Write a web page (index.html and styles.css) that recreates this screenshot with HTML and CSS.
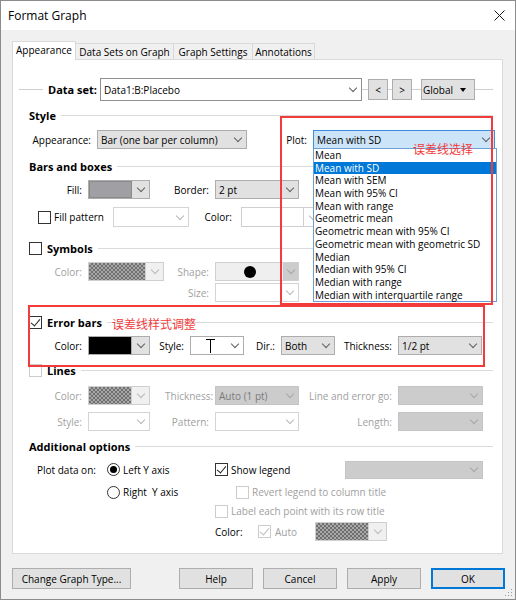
FILE: index.html
```html
<!DOCTYPE html>
<html lang="en">

<head>
    <meta charset="UTF-8">
    <meta name="viewport" content="width=device-width, initial-scale=1.0">
    <title>Format Graph</title>
    <link rel="stylesheet" href="styles.css">
</head>

<body>
    <div class="window">
        <div class="titlebar">
            <span class="title">Format Graph</span>
            <svg class="close" width="11" height="11" viewBox="0 0 11 11">
                <path d="M0.5 0.5L10.5 10.5M10.5 0.5L0.5 10.5" stroke="#1a1a1a" stroke-width="1" />
            </svg>
        </div>

        <div class="tabs">
            <span class="tab active t1">Appearance</span>
            <span class="tab t2">Data Sets on Graph</span>
            <span class="tab t3">Graph Settings</span>
            <span class="tab t4">Annotations</span>
        </div>

        <div class="panel">
            <!-- data set picker -->
            <div class="dataset-row">
                <span class="seg s24"></span>
                <b class="ds-label">Data set:</b>
                <span class="combo white ds-combo"><span class="val">Data1:B:Placebo</span><i class="dd"></i></span>
                <span class="seg s6"></span>
                <span class="btn nav">&lt;</span>
                <span class="seg s4"></span>
                <span class="btn nav">&gt;</span>
                <span class="seg s9"></span>
                <span class="btn global">Global<i class="tri"></i></span>
                <span class="seg grow"></span>
            </div>

            <div class="section-head mt7"><b>Style</b></div>
            <div class="app-row mt8">
                <span class="lab">Appearance:</span>
                <span class="combo w150"><span class="val">Bar (one bar per column)</span><i class="dd"></i></span>
                <span class="lab">Plot:</span>
                <span class="combo focus w182"><span class="val">Mean with SD</span><i class="dd"></i></span>
            </div>

            <div class="section-head mt10"><b>Bars and boxes</b></div>
            <div class="frow mt7">
                <span class="lab">Fill:</span>
                <span class="swatch w62"><i class="sw fill"></i><i class="dd"></i></span>
                <span class="lab">Border:</span>
                <span class="combo w84"><span class="val">2 pt</span><i class="dd"></i></span>
            </div>
            <div class="pattern-row mt8">
                <span class="opt pl25"><i class="chk"></i>Fill pattern</span>
                <span class="combo off w76 h20"><span class="val"></span><i class="dd"></i></span>
                <span class="lab pr9">Color:</span>
                <span class="swatch plain w81 h20"><i class="sw"></i><i class="dd"></i></span>
            </div>

            <div class="section-head mt14"><i class="chk"></i><b>Symbols</b></div>
            <div class="frow mt7">
                <span class="lab dim">Color:</span>
                <span class="swatch off w76"><i class="sw checker"></i><i class="dd"></i></span>
                <span class="lab dim">Shape:</span>
                <span class="combo shape w84"><span class="val"><i class="dot"></i></span><i class="dd"></i></span>
            </div>
            <div class="frow mt2">
                <span></span>
                <span></span>
                <span class="lab dim">Size:</span>
                <span class="combo off w84"><span class="val"></span><i class="dd"></i></span>
            </div>

            <div class="section-head mt13"><i class="chk on"></i><b>Error bars</b></div>
            <div class="err-row mt7">
                <span class="lab">Color:</span>
                <span class="swatch w62"><i class="sw black"></i><i class="dd"></i></span>
                <span class="lab">Style:</span>
                <span class="combo white w54">
                    <span class="val">
                        <svg class="cap" width="9" height="14" viewBox="0 0 9 14">
                            <path d="M0 0.5H9M4.5 0.5V14" stroke="#000" stroke-width="1" />
                        </svg>
                    </span><i class="dd"></i>
                </span>
                <span class="lab">Dir.:</span>
                <span class="combo w54"><span class="val">Both</span><i class="dd"></i></span>
                <span class="lab">Thickness:</span>
                <span class="combo w84"><span class="val">1/2 pt</span><i class="dd"></i></span>
            </div>

            <div class="section-head mt8"><i class="chk off"></i><b>Lines</b></div>
            <div class="frow mt9">
                <span class="lab dim">Color:</span>
                <span class="swatch off w62"><i class="sw checker"></i><i class="dd"></i></span>
                <span class="lab dim">Thickness:</span>
                <span class="combo grey w84"><span class="val">Auto (1 pt)</span><i class="dd"></i></span>
                <span class="lab dim">Line and error go:</span>
                <span class="combo grey w85"><span class="val"></span><i class="dd"></i></span>
            </div>
            <div class="frow mt7">
                <span class="lab dim">Style:</span>
                <span class="combo off w62"><span class="val"></span><i class="dd"></i></span>
                <span class="lab dim">Pattern:</span>
                <span class="combo off w84"><span class="val"></span><i class="dd"></i></span>
                <span class="lab dim">Length:</span>
                <span class="combo grey w85"><span class="val"></span><i class="dd"></i></span>
            </div>

            <div class="section-head mt8"><b>Additional options</b></div>
            <div class="arow h19 mt7">
                <span class="plab">Plot data on:</span>
                <span class="opt"><i class="radio on"></i>Left Y axis</span>
                <span class="opt"><i class="chk on"></i>Show legend</span>
                <span class="combo grey w138 h18"><span class="val"></span><i class="dd"></i></span>
            </div>
            <div class="arow h18 mt4">
                <span></span>
                <span class="opt"><i class="radio"></i>Right&nbsp; Y axis</span>
                <span class="opt dim pl21"><i class="chk off"></i>Revert legend to column title</span>
            </div>
            <div class="arow h14 mt3">
                <span></span>
                <span></span>
                <span class="opt dim"><i class="chk off"></i>Label each point with its row title</span>
            </div>
            <div class="arow h19 mt4">
                <span></span>
                <span></span>
                <span class="color-line">
                    <span class="clab">Color:</span>
                    <i class="chk off on"></i>
                    <span class="auto dim">Auto</span>
                    <span class="swatch off w72"><i class="sw checker"></i><i class="dd"></i></span>
                </span>
            </div>
        </div>

        <div class="buttons">
            <span class="btn wide">Change Graph Type...</span>
            <span class="btn act help">Help</span>
            <span class="btn act">Cancel</span>
            <span class="btn act">Apply</span>
            <span class="btn act default">OK</span>
        </div>

        <!-- open dropdown of the Plot combo -->
        <ul class="droplist">
            <li>Mean</li>
            <li class="sel">Mean with SD</li>
            <li>Mean with SEM</li>
            <li>Mean with 95% CI</li>
            <li>Mean with range</li>
            <li>Geometric mean</li>
            <li>Geometric mean with 95% CI</li>
            <li>Geometric mean with geometric SD</li>
            <li>Median</li>
            <li>Median with 95% CI</li>
            <li>Median with range</li>
            <li>Median with interquartile range</li>
        </ul>

        <!-- red annotations -->
        <div class="mark mark-plot"></div>
        <div class="mark mark-err"></div>
        <span class="note note-plot">误差线选择</span>
        <span class="note note-err">误差线样式调整</span>

        <svg class="grip" width="8" height="8" viewBox="0 0 8 8">
            <rect x="6" y="0" width="1" height="1" fill="#999" />
            <rect x="3" y="3" width="1" height="1" fill="#999" />
            <rect x="6" y="3" width="1" height="1" fill="#999" />
            <rect x="0" y="6" width="1" height="1" fill="#999" />
            <rect x="3" y="6" width="1" height="1" fill="#999" />
            <rect x="6" y="6" width="1" height="1" fill="#999" />
        </svg>
    </div>
</body>

</html>
```

FILE: styles.css
```css
* {
    box-sizing: border-box;
}

body {
    margin: 0;
    background: #f0f0f0;
    font-family: "Segoe UI", "Open Sans", sans-serif;
    font-size: 10px;
    color: #000;
}

.window {
    position: relative;
    width: 516px;
    height: 600px;
    border: 1px solid #8c8c8c;
    background: #f0f0f0;
    overflow: hidden;
}

/* title bar */
.titlebar {
    display: flex;
    align-items: center;
    justify-content: space-between;
    height: 29px;
    padding: 0 10px 0 7px;
    background: #fff;
}

.title {
    font-size: 12px;
}

/* tabs */
.tabs {
    display: flex;
    align-items: flex-end;
    height: 29px;
    padding-left: 11px;
}

.tab {
    display: flex;
    align-items: center;
    justify-content: center;
    height: 16px;
    border: 1px solid #d9d9d9;
    border-bottom: none;
    margin-left: -1px;
    white-space: nowrap;
}

.tab.active {
    position: relative;
    z-index: 1;
    height: 19px;
    margin-bottom: -1px;
    margin-left: 0;
    background: #fff;
    padding-bottom: 2px;
}

.t1 { width: 64px; }
.t2 { width: 99px; }
.t3 { width: 80px; }
.t4 { width: 63px; }

/* panel */
.panel {
    margin-left: 11px;
    width: 491px;
    height: 495px;
    border: 1px solid #d9d9d9;
    background: #fff;
    padding-top: 18px;
}

.mt2 { margin-top: 2px; }
.mt3 { margin-top: 3px; }
.mt4 { margin-top: 4px; }
.mt7 { margin-top: 7px; }
.mt8 { margin-top: 8px; }
.mt9 { margin-top: 9px; }
.mt10 { margin-top: 10px; }
.mt13 { margin-top: 13px; }
.mt14 { margin-top: 14px; }

.dim {
    color: #a0a0a0;
}

/* data set row */
.dataset-row {
    display: flex;
    align-items: center;
    height: 23px;
    padding: 0 9px 0 6px;
}

.seg {
    height: 1px;
    background: #cfcfcf;
    flex: none;
}

.s24 { width: 24px; }
.s9 { width: 9px; }
.s6 { width: 6px; }
.s4 { width: 4px; }
.seg.grow { flex: 1; }

.ds-label {
    width: 52px;
    margin-left: 5px;
    font-size: 11px;
    white-space: nowrap;
}

.ds-combo {
    width: 262px;
    height: 23px !important;
    border-color: #8f8f8f !important;
}

.btn {
    display: flex;
    align-items: center;
    justify-content: center;
    height: 21px;
    background: #e1e1e1;
    border: 1px solid #adadad;
    white-space: nowrap;
    flex: none;
}

.btn.nav {
    width: 20px;
}

.btn.global {
    width: 54px;
    justify-content: space-between;
    padding: 0 8px 0 1px;
}

.tri {
    width: 0;
    height: 0;
    border-left: 3px solid transparent;
    border-right: 3px solid transparent;
    border-top: 4px solid #000;
}

/* section headers */
.section-head {
    display: flex;
    align-items: center;
    gap: 5px;
    height: 14px;
    margin-left: 16px;
    margin-right: 9px;
    font-size: 11px;
    white-space: nowrap;
}

.section-head::after {
    content: "";
    flex: 1;
    height: 1px;
    background: #dadada;
}

/* form rows */
.frow,
.app-row,
.err-row,
.pattern-row,
.arow {
    display: grid;
    align-items: center;
    height: 19px;
    white-space: nowrap;
}

.frow {
    grid-template-columns: 75px 77px 50px 84px 99px 85px;
}

.app-row {
    grid-template-columns: 84px 150px 66px 182px;
}

.err-row {
    grid-template-columns: 75px 62px 40px 54px 37px 54px 63px 84px;
}

.pattern-row {
    grid-template-columns: 100px 76px 52px 81px;
    height: 20px;
}

.arow {
    grid-template-columns: 93px 109px 130px 138px;
}

.h18 { height: 18px !important; }
.h14 { height: 14px !important; }
.h19 { height: 19px; }
.h20 { height: 20px !important; }

.lab {
    text-align: right;
    padding-right: 6px;
}

.lab.pr9 {
    padding-right: 9px;
}

.plab {
    padding-left: 24px;
}

.opt {
    display: flex;
    align-items: center;
    gap: 3px;
}

.pl25 { padding-left: 25px; }
.pl21 { padding-left: 21px; }

/* combos */
.combo {
    display: flex;
    align-items: center;
    height: 19px;
    border: 1px solid #adadad;
    background: #e1e1e1;
    padding-left: 3px;
    white-space: nowrap;
}

.combo .val {
    flex: 1;
    display: flex;
    align-items: center;
    overflow: hidden;
}

.dd {
    display: flex;
    align-items: center;
    justify-content: center;
    width: 17px;
    height: 100%;
    flex: none;
}

.dd::after {
    content: "";
    width: 5px;
    height: 5px;
    border: solid #606060;
    border-width: 0 1px 1px 0;
    transform: rotate(45deg);
    margin-top: -3px;
}

.combo.white {
    background: #fff;
}

.combo.focus {
    background: #cce4f7;
    border-color: #3d8ee0;
}

.combo.off {
    background: #fff;
    border-color: #d4d4d4;
}

.combo.off .dd::after {
    border-color: #b9b9b9;
}

.combo.grey {
    background: #cccccc;
    border-color: #c4c4c4;
    color: #7a7a7a;
}

.combo.grey .dd::after {
    border-color: #a6a6a6;
}

.combo.shape {
    background: #efefef;
    border-color: #d0d0d0;
    padding-left: 0;
}

.combo.shape .val {
    justify-content: center;
}

.combo.shape .dd {
    width: 15px;
    background: #cccccc;
}

.combo.shape .dd::after {
    border-color: #a6a6a6;
}

.dot {
    width: 12px;
    height: 12px;
    border-radius: 50%;
    background: #000;
}

.cap {
    margin-left: 12px;
}

.w54 { width: 54px; }
.w62 { width: 62px; }
.w72 { width: 72px; }
.w76 { width: 76px; }
.w81 { width: 81px; }
.w84 { width: 84px; }
.w85 { width: 85px; }
.w138 { width: 138px; }
.w150 { width: 150px; }
.w182 { width: 182px; }

/* colour swatch pickers */
.swatch {
    display: flex;
    height: 19px;
    border: 1px solid #adadad;
    background: #e1e1e1;
}

.swatch .sw {
    flex: 1;
    border-right: 1px solid #adadad;
}

.sw.fill {
    background: #a09fa4;
    border: 1px solid #8a8a8a;
}

.sw.black {
    background: #000;
}

.sw.checker {
    background: repeating-conic-gradient(#6f6f6f 0 25%, #a8a8a8 0 50%) 0 0 / 4px 4px;
}

.swatch.plain {
    background: #fff;
    border-color: #cfcfcf;
}

.swatch.plain .sw {
    border-right-color: #cfcfcf;
}

.swatch.off {
    border-color: #cfcfcf;
    background: #f0f0f0;
}

.swatch.off .sw {
    border-right-color: #cfcfcf;
}

.swatch.off .dd::after,
.swatch.plain .dd::after {
    border-color: #b9b9b9;
}

/* checkbox + radio */
.chk {
    display: inline-flex;
    align-items: center;
    justify-content: center;
    width: 13px;
    height: 13px;
    border: 1px solid #333;
    background: #fff;
    flex: none;
}

.chk.on::after {
    content: "";
    width: 4px;
    height: 8px;
    border: solid #222;
    border-width: 0 1px 1px 0;
    transform: rotate(40deg);
    margin-top: -2px;
}

.chk.off {
    border-color: #cccccc;
}

.chk.off.on::after {
    border-color: #bdbdbd;
}

.radio {
    display: inline-flex;
    align-items: center;
    justify-content: center;
    width: 13px;
    height: 13px;
    border: 1px solid #333;
    border-radius: 50%;
    margin-left: 1px;
    flex: none;
}

.radio.on::after {
    content: "";
    width: 7px;
    height: 7px;
    border-radius: 50%;
    background: #000;
}

.color-line {
    grid-column: span 2;
    display: flex;
    align-items: center;
}

.clab {
    width: 43px;
}

.auto {
    width: 44px;
    padding-left: 4px;
}

/* bottom buttons */
.buttons {
    display: flex;
    gap: 10px;
    margin-top: 14px;
    padding-left: 11px;
}

.btn.wide {
    width: 119px;
}

.btn.act {
    width: 74px;
}

.btn.help {
    margin-left: 38px;
}

.btn.default {
    border-color: #0078d7;
    box-shadow: inset 0 0 0 1px #0078d7;
}

/* dropdown list */
.droplist {
    position: absolute;
    left: 312px;
    top: 147px;
    width: 184px;
    height: 154px;
    margin: 0;
    padding: 0;
    list-style: none;
    background: #fff;
    border: 1px solid #6a9fd8;
}

.droplist li {
    height: 12.7px;
    line-height: 12.7px;
    padding-left: 1px;
    white-space: nowrap;
}

.droplist li.sel {
    background: #0078d7;
    color: #fff;
}

/* red annotations */
.mark {
    position: absolute;
    border: 2px solid #f23c3c;
}

.mark-plot {
    left: 279px;
    top: 115px;
    width: 213px;
    height: 189px;
}

.mark-err {
    left: 27px;
    top: 304px;
    width: 457px;
    height: 62px;
}

.note {
    position: absolute;
    font-family: "Noto Sans CJK SC", sans-serif;
    font-size: 12px;
    line-height: 14px;
    color: #f23c3c;
    white-space: nowrap;
}

.note-plot {
    left: 412px;
    top: 141px;
}

.note-err {
    left: 111px;
    top: 316px;
}

.grip {
    position: absolute;
    right: 2px;
    bottom: 2px;
}
```
